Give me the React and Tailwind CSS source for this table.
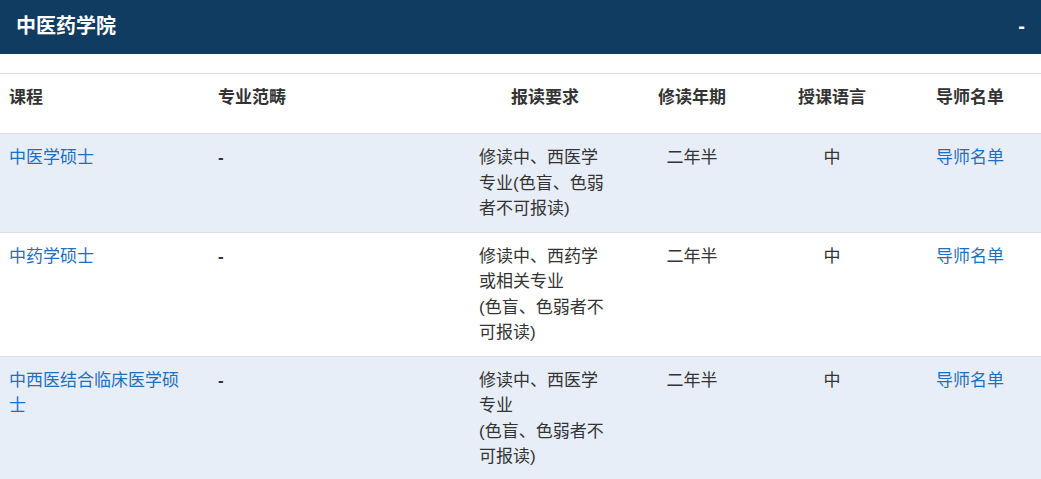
const rows = [
  {
    curso: ['中医学硕士'],
    req: ['修读中、西医学', '专业(色盲、色弱', '者不可报读)'],
    bg: 'bg-[#e7eef8]',
  },
  {
    curso: ['中药学硕士'],
    req: ['修读中、西药学', '或相关专业', '(色盲、色弱者不', '可报读)'],
    bg: 'bg-white',
  },
  {
    curso: ['中西医结合临床医学硕', '士'],
    req: ['修读中、西医学', '专业', '(色盲、色弱者不', '可报读)'],
    bg: 'bg-[#e7eef8]',
  },
];

const cols = 'grid grid-cols-[210px_261px_148px_146px_134px_142px]';

function App() {
  return (
    <div
      className="w-[1041px] bg-white text-[17px] leading-[25.5px] text-[#333]"
      style={{ fontFamily: '"Liberation Sans", "Noto Sans CJK SC", sans-serif' }}
    >
      {/* Barra de título */}
      <div className="h-[54px] bg-[#103c62] flex items-center justify-between pl-[16px] pr-[16px]">
        <h2 className="text-[20px] font-bold text-white">中医药学院</h2>
        <span className="text-white font-bold text-[20px]">-</span>
      </div>

      <div className="h-[19px]" />

      {/* Cabecera de la tabla */}
      <div className={`${cols} border-t border-[#dddddd] h-[60px] font-bold`}>
        <div className="pl-[9px] pt-[11px]">课程</div>
        <div className="pl-[8px] pt-[11px]">专业范畴</div>
        <div className="text-center pt-[11px]">报读要求</div>
        <div className="text-center pt-[11px]">修读年期</div>
        <div className="text-center pt-[11px]">授课语言</div>
        <div className="text-center pt-[11px]">导师名单</div>
      </div>

      {/* Filas */}
      {rows.map((r, i) => (
        <div key={i} className={`${cols} border-t border-[#dddddd] ${r.bg} pt-[11px] pb-[10px]`}>
          <div className="pl-[9px] text-[#1f6fbf] whitespace-nowrap">
            {r.curso.map((l, j) => (
              <div key={j}>{l}</div>
            ))}
          </div>
          <div className="pl-[8px] font-bold">-</div>
          <div className="pl-[8px] whitespace-nowrap">
            {r.req.map((l, j) => (
              <div key={j}>{l}</div>
            ))}
          </div>
          <div className="text-center">二年半</div>
          <div className="text-center">中</div>
          <div className="text-center text-[#1f6fbf]">导师名单</div>
        </div>
      ))}
    </div>
  );
}

export default App;
